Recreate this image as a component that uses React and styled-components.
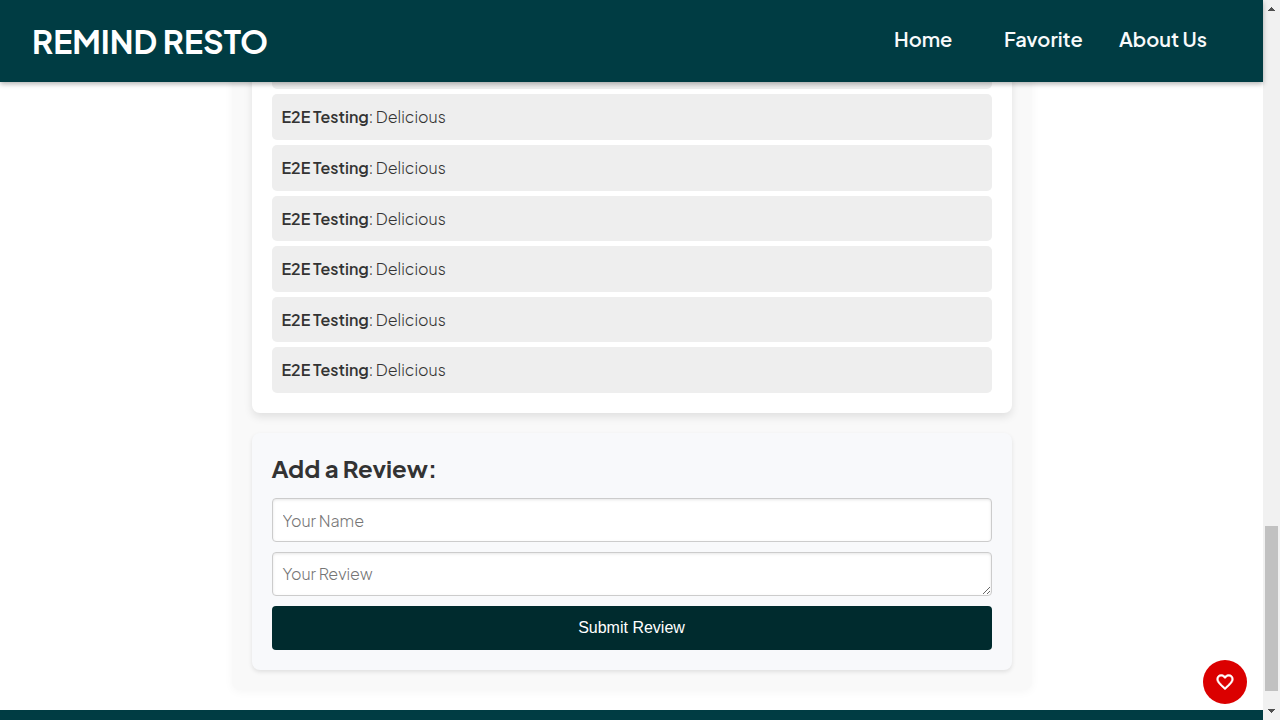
import React from 'react';
import styled, { createGlobalStyle } from 'styled-components';
import { MdFavoriteBorder } from 'react-icons/md';

const GlobalStyle = createGlobalStyle`
  *, *::before, *::after { box-sizing: border-box; }
  body {
    margin: 0;
    background: #fff;
    color: #333;
    font-family: 'Plus Jakarta Sans', Inter, 'Liberation Sans', sans-serif;
    font-size: 16px;
    line-height: 1.6;
  }
`;

const Frame = styled.div`
  display: grid;
  grid-template-columns: minmax(0, 1fr) 17px;
  height: 100vh;
`;

const Page = styled.div`
  position: relative;
  display: flex;
  flex-direction: column;
  min-height: 0;
`;

const Header = styled.header`
  z-index: 2;
  flex: none;
  display: flex;
  align-items: center;
  justify-content: space-between;
  padding: 14px 56px 14px 32px;
  background: #003c43;
  box-shadow: 0 2px 5px rgba(0, 0, 0, 0.3);
`;

const Brand = styled.h1`
  margin: 0;
  color: #fff;
  font-size: 32px;
  font-weight: 700;
  line-height: 54px;
  white-space: nowrap;
`;

const Nav = styled.nav`
  display: grid;
  grid-template-columns: 110px 115px 88px;
  padding-bottom: 4px;
`;

const NavLink = styled.a`
  color: #f8fafb;
  font-size: 20px;
  font-weight: 600;
  line-height: 32px;
  text-decoration: none;
  white-space: nowrap;
`;

const Scroller = styled.div`
  flex: 1;
  min-height: 0;
  display: flex;
  flex-direction: column;
  justify-content: flex-end;
  overflow: hidden;
`;

const Detail = styled.main`
  flex: none;
  width: 100%;
  max-width: 800px;
  margin: 0 auto 20px;
  padding: 20px;
  display: flex;
  flex-direction: column;
  gap: 20px;
  background: #f9f9f9;
  border-radius: 8px;
  box-shadow: 0 2px 10px rgba(0, 0, 0, 0.04);
`;

const Card = styled.section`
  padding: 20px;
  border-radius: 8px;
  background: ${(p) => (p.$tinted ? '#f8f9fb' : '#fff')};
  box-shadow: ${(p) =>
    p.$tinted ? '0 2px 4px rgba(0, 0, 0, 0.1)' : '0 4px 8px rgba(0, 0, 0, 0.1)'};
`;

const ReviewList = styled.ul`
  margin: 0;
  padding: 0;
  display: flex;
  flex-direction: column;
  gap: 5px;
  list-style: none;
`;

const Review = styled.li`
  padding: 10px;
  border-radius: 5px;
  background: #eee;
  font-weight: 300;
`;

const Reviewer = styled.strong`
  font-weight: 600;
`;

const Form = styled.form`
  display: flex;
  flex-direction: column;
  gap: 10px;
`;

const FormTitle = styled.h2`
  margin: 0 0 15px;
  font-size: 24px;
  font-weight: 700;
  line-height: 30px;
`;

const Field = styled.input`
  display: block;
  width: 100%;
  height: 44px;
  padding: 10px;
  border: 1px solid #ccc;
  border-radius: 4px;
  background: #fff;
  box-shadow: inset 0 1px 3px rgba(0, 0, 0, 0.1);
  color: #333;
  font: 300 16px/22px 'Plus Jakarta Sans', Inter, 'Liberation Sans', sans-serif;

  &::placeholder { color: #757575; }
`;

const Submit = styled.button`
  height: 44px;
  border: 0;
  border-radius: 4px;
  background: #002b2e;
  color: #fff;
  font: 16px/22px 'Liberation Sans', Arial, sans-serif;
  cursor: pointer;
`;

const Footer = styled.footer`
  flex: none;
  height: 10px;
  background: #003c43;
`;

const LikeButton = styled.button`
  position: absolute;
  right: 16px;
  bottom: 16px;
  z-index: 3;
  display: flex;
  align-items: center;
  justify-content: center;
  width: 44px;
  height: 44px;
  padding: 0;
  border: 0;
  border-radius: 50%;
  background: #db0000;
  color: #fff;
  font-size: 20px;
  cursor: pointer;

  path:last-child {
    stroke: currentColor;
    stroke-width: 0.6;
  }
`;

const ScrollTrack = styled.div`
  display: flex;
  flex-direction: column;
  align-items: center;
  background: #f1f1f1;
`;

const ScrollArrow = styled.svg`
  flex: none;
  display: block;
  width: 17px;
  height: 17px;
  fill: #505050;
`;

const ScrollRail = styled.div`
  flex: 1;
  display: flex;
  flex-direction: column;
  justify-content: flex-end;
  padding-bottom: 12px;
`;

const ScrollThumb = styled.div`
  width: 13px;
  height: 165px;
  background: #c1c1c1;
`;

const reviews = Array.from({ length: 7 }, (_, id) => ({
  id,
  name: 'E2E Testing',
  text: 'Delicious',
}));

export default function App() {
  return (
    <>
      <GlobalStyle />
      <Frame>
        <Page>
          <Header>
            <Brand>REMIND RESTO</Brand>
            <Nav>
              <NavLink href="#home">Home</NavLink>
              <NavLink href="#favorite">Favorite</NavLink>
              <NavLink href="#about">About Us</NavLink>
            </Nav>
          </Header>
          <Scroller>
            <Detail>
              <Card>
                <ReviewList>
                  {reviews.map((r) => (
                    <Review key={r.id}>
                      <Reviewer>{r.name}</Reviewer>: {r.text}
                    </Review>
                  ))}
                </ReviewList>
              </Card>
              <Card $tinted>
                <FormTitle>Add a Review:</FormTitle>
                <Form onSubmit={(e) => e.preventDefault()}>
                  <Field type="text" placeholder="Your Name" aria-label="Your Name" />
                  <Field as="textarea" rows={1} placeholder="Your Review" aria-label="Your Review" />
                  <Submit type="submit">Submit Review</Submit>
                </Form>
              </Card>
            </Detail>
            <Footer />
          </Scroller>
          <LikeButton type="button" aria-label="Like this restaurant">
            <MdFavoriteBorder />
          </LikeButton>
        </Page>
        <ScrollTrack aria-hidden="true">
          <ScrollArrow viewBox="0 0 17 17" shapeRendering="crispEdges">
            <path d="M5 11h7v-1h-1v-1h-1v-1h-1v-1h-1v1h-1v1h-1v1h-1z" />
          </ScrollArrow>
          <ScrollRail>
            <ScrollThumb />
          </ScrollRail>
          <ScrollArrow viewBox="0 0 17 17" shapeRendering="crispEdges">
            <path d="M5 6h7v1h-1v1h-1v1h-1v1h-1v-1h-1v-1h-1v-1h-1z" />
          </ScrollArrow>
        </ScrollTrack>
      </Frame>
    </>
  );
}
